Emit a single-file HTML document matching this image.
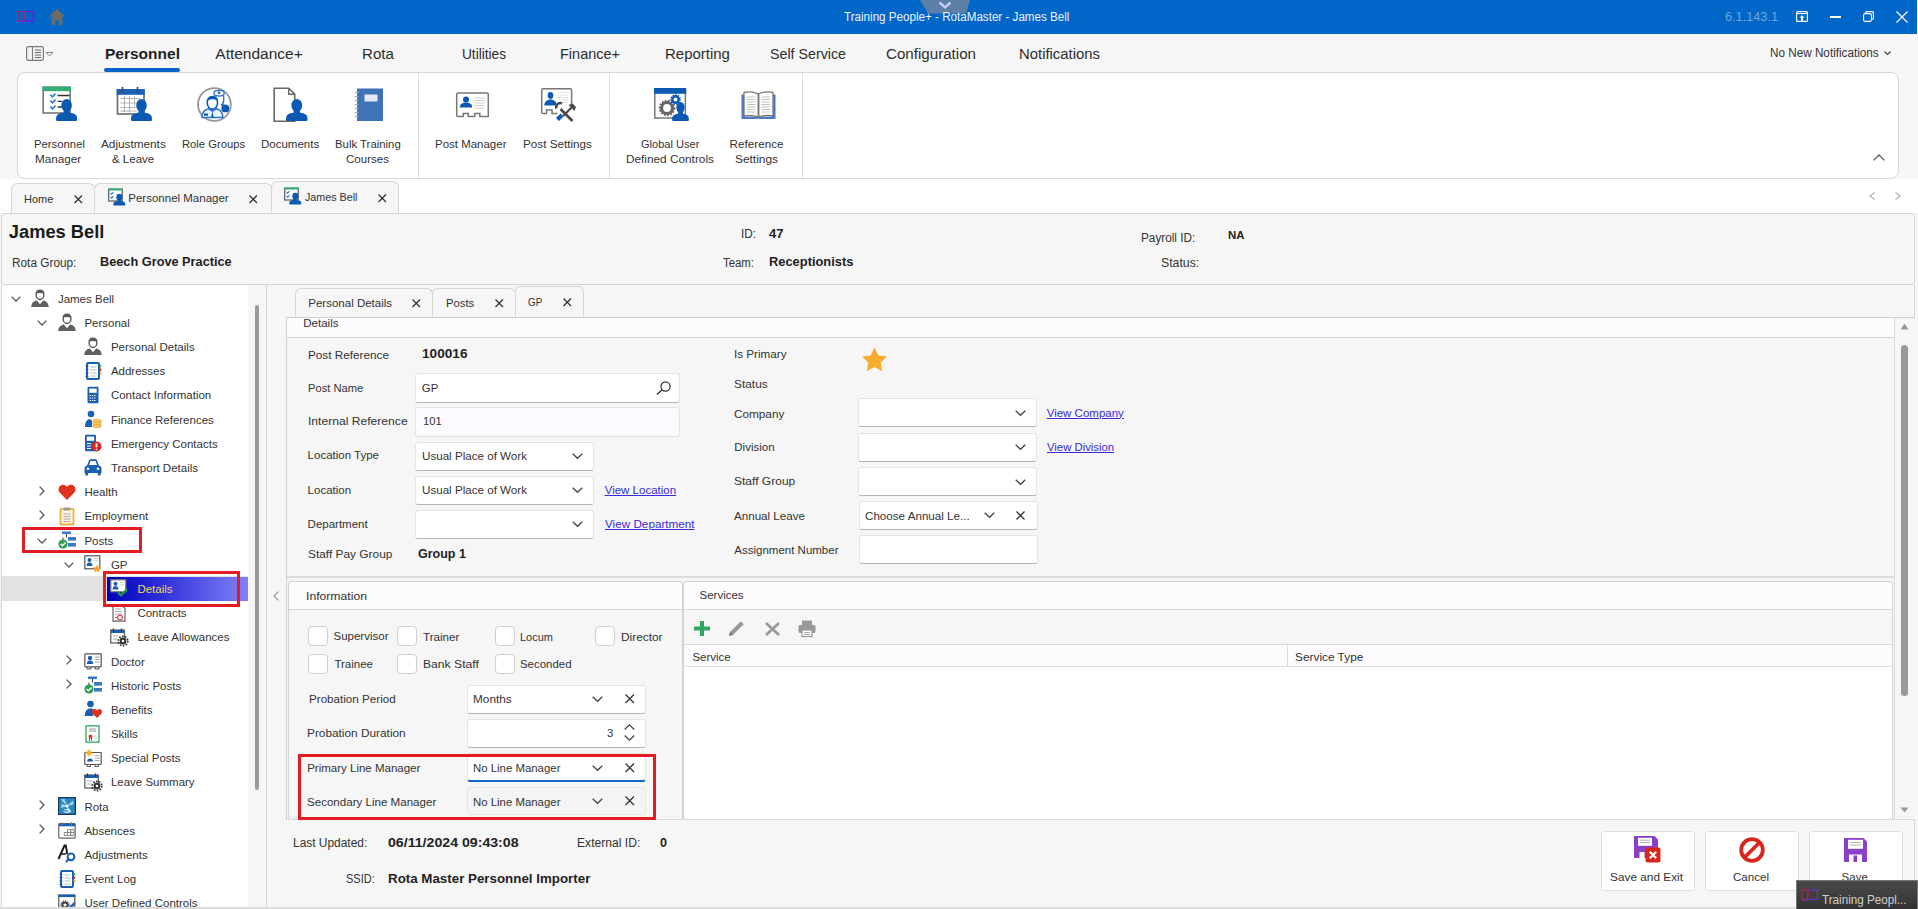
<!DOCTYPE html>
<html><head><meta charset="utf-8">
<style>
*{margin:0;padding:0;box-sizing:border-box}
html,body{width:1918px;height:909px;overflow:hidden;background:#f6f6f6;font-family:"Liberation Sans",sans-serif;color:#333}
.a{position:absolute}
.t{position:absolute;white-space:nowrap;line-height:1}
svg{position:absolute;overflow:visible}
</style></head><body>
<div class="a" style="left:0px;top:0px;width:1917px;height:34px;background:#0066c8"></div>
<div class="a" style="left:1917px;top:0px;width:1px;height:34px;background:#f6f6f6"></div>
<svg style="left:17px;top:10px" width="18" height="13" viewBox="0 0 18 13"><path d="M1 1.5h5.5c1.2 0 1.6 1 1.4 2.3L7 11.5H1z" fill="none" stroke="#c0206a" stroke-width="1.2"/><path d="M8 1.5h8v9.5H3" fill="none" stroke="#6020e0" stroke-width="1.3"/></svg>
<svg style="left:48px;top:8px" width="18" height="18" viewBox="0 0 18 18"><path d="M9 0.5L0.5 8.8h3v8.5h3.8v-5h3.4v5h3.8V8.8h3z" fill="#6a6a6a"/></svg>
<svg style="left:920px;top:0px" width="50" height="14" viewBox="0 0 50 14"><path d="M0 0h50l-4 13.5H8z" fill="#5b7fa6"/><path d="M19.5 2.5l5.5 5 5.5-5" fill="none" stroke="#c4ccf0" stroke-width="2.4"/></svg>
<div class="t" style="left:843.50px;top:10.74px;font-size:12px;color:#eef3ff;transform:scaleX(0.969);transform-origin:0 0;">Training People+ - RotaMaster - James Bell</div>
<div class="t" style="left:1725.00px;top:10.81px;font-size:12.5px;color:#6fa6e0;transform:scaleX(1.017);transform-origin:0 0;">6.1.143.1</div>
<svg style="left:1796px;top:11px" width="12" height="11" viewBox="0 0 12 11"><rect x="0.6" y="0.6" width="10.8" height="9.8" rx="1" fill="none" stroke="#fff" stroke-width="1.1"/><line x1="0.6" y1="2.6" x2="11.4" y2="2.6" stroke="#fff" stroke-width="1"/><path d="M6 4.2l-2.6 2.6h1.7v3.6h1.8V6.8h1.7z" fill="#fff"/></svg>
<div class="a" style="left:1830px;top:16px;width:11px;height:1.5px;background:#fff"></div>
<svg style="left:1863px;top:11px" width="11" height="11" viewBox="0 0 11 11"><rect x="0.6" y="2.6" width="7.8" height="7.8" rx="1.5" fill="none" stroke="#fff" stroke-width="1.1"/><path d="M2.6 2.6V1.8c0-.7.5-1.2 1.2-1.2h5.4c.7 0 1.2.5 1.2 1.2v5.4c0 .7-.5 1.2-1.2 1.2h-.8" fill="none" stroke="#fff" stroke-width="1.1"/></svg>
<svg style="left:1896px;top:11px" width="12" height="12" viewBox="0 0 12 12"><path d="M0.5 0.5l11 11M11.5 0.5l-11 11" stroke="#fff" stroke-width="1.2"/></svg>
<div class="a" style="left:0px;top:34px;width:1918px;height:38px;background:#f6f6f6"></div>
<svg style="left:26px;top:46px" width="30" height="15" viewBox="0 0 30 15"><rect x="0.6" y="0.6" width="16.8" height="13.8" rx="1.8" fill="#f4f4f4" stroke="#7a7a7a" stroke-width="1.2"/><line x1="6.5" y1="1" x2="6.5" y2="14" stroke="#7a7a7a" stroke-width="1.1"/><path d="M9 4h6M9 6.5h6M9 9h6M9 11.5h6" stroke="#666" stroke-width="1"/><path d="M20 6.5h7l-3.5 3.5z" fill="none" stroke="#888" stroke-width="1"/></svg>
<div class="t" style="left:105.00px;top:45.97px;font-size:15.5px;color:#1e1e1e;font-weight:bold;">Personnel</div>
<div class="a" style="left:104px;top:68px;width:76px;height:3.5px;background:#0a64c8;border-radius:2px"></div>
<div class="t" style="left:215.30px;top:45.97px;font-size:15.5px;color:#2d2d2d;">Attendance+</div>
<div class="t" style="left:362.00px;top:45.97px;font-size:15.5px;color:#2d2d2d;transform:scaleX(0.977);transform-origin:0 0;">Rota</div>
<div class="t" style="left:462.00px;top:45.97px;font-size:15.5px;color:#2d2d2d;transform:scaleX(0.881);transform-origin:0 0;">Utilities</div>
<div class="t" style="left:560.00px;top:45.97px;font-size:15.5px;color:#2d2d2d;transform:scaleX(0.935);transform-origin:0 0;">Finance+</div>
<div class="t" style="left:664.50px;top:45.97px;font-size:15.5px;color:#2d2d2d;transform:scaleX(0.966);transform-origin:0 0;">Reporting</div>
<div class="t" style="left:770.00px;top:45.97px;font-size:15.5px;color:#2d2d2d;transform:scaleX(0.919);transform-origin:0 0;">Self Service</div>
<div class="t" style="left:886.00px;top:45.97px;font-size:15.5px;color:#2d2d2d;transform:scaleX(0.976);transform-origin:0 0;">Configuration</div>
<div class="t" style="left:1019.00px;top:45.97px;font-size:15.5px;color:#2d2d2d;transform:scaleX(0.959);transform-origin:0 0;">Notifications</div>
<div class="t" style="left:1770.30px;top:47.34px;font-size:12px;color:#333;transform:scaleX(0.976);transform-origin:0 0;">No New Notifications</div>
<svg style="left:1884px;top:51px" width="7" height="5" viewBox="0 0 7 5"><path d="M0.5 0.5l3 3 3-3" fill="none" stroke="#444" stroke-width="1.2"/></svg>
<div class="a" style="left:17px;top:72px;width:1882px;height:107px;background:#fff;border:1px solid #d8d8d8;border-radius:8px"></div>
<div class="a" style="left:418px;top:73px;width:1px;height:105px;background:#dedede"></div>
<div class="a" style="left:609px;top:73px;width:1px;height:105px;background:#dedede"></div>
<div class="a" style="left:802px;top:73px;width:1px;height:105px;background:#dedede"></div>
<svg style="left:1873px;top:154px" width="12" height="7" viewBox="0 0 12 7"><path d="M0.6 6.4l5.4-5.4 5.4 5.4" fill="none" stroke="#555" stroke-width="1.3"/></svg>
<div class="t" style="left:33.90px;top:138.19px;font-size:11.7px;color:#333;transform:scaleX(0.968);transform-origin:0 0;">Personnel</div>
<div class="t" style="left:35.00px;top:152.59px;font-size:11.7px;color:#333;">Manager</div>
<div class="t" style="left:101.20px;top:138.19px;font-size:11.7px;color:#333;transform:scaleX(1.007);transform-origin:0 0;">Adjustments</div>
<div class="t" style="left:112.00px;top:152.59px;font-size:11.7px;color:#333;transform:scaleX(0.983);transform-origin:0 0;">&amp; Leave</div>
<div class="t" style="left:182.40px;top:138.19px;font-size:11.7px;color:#333;transform:scaleX(0.962);transform-origin:0 0;">Role Groups</div>
<div class="t" style="left:261.00px;top:138.19px;font-size:11.7px;color:#333;transform:scaleX(0.985);transform-origin:0 0;">Documents</div>
<div class="t" style="left:335.00px;top:138.19px;font-size:11.7px;color:#333;transform:scaleX(0.973);transform-origin:0 0;">Bulk Training</div>
<div class="t" style="left:346.00px;top:152.59px;font-size:11.7px;color:#333;transform:scaleX(0.987);transform-origin:0 0;">Courses</div>
<div class="t" style="left:435.00px;top:138.19px;font-size:11.7px;color:#333;transform:scaleX(0.982);transform-origin:0 0;">Post Manager</div>
<div class="t" style="left:523.00px;top:138.19px;font-size:11.7px;color:#333;">Post Settings</div>
<div class="t" style="left:640.60px;top:138.19px;font-size:11.7px;color:#333;transform:scaleX(0.945);transform-origin:0 0;">Global User</div>
<div class="t" style="left:626.00px;top:152.59px;font-size:11.7px;color:#333;transform:scaleX(1.010);transform-origin:0 0;">Defined Controls</div>
<div class="t" style="left:729.60px;top:138.19px;font-size:11.7px;color:#333;">Reference</div>
<div class="t" style="left:735.00px;top:152.59px;font-size:11.7px;color:#333;transform:scaleX(1.017);transform-origin:0 0;">Settings</div>
<div class="a" style="left:0px;top:179px;width:1918px;height:34px;background:#fff"></div>
<div class="a" style="left:11px;top:183px;width:84px;height:31px;background:#f6f6f6;border:1px solid #d6d6d6;border-bottom:none;border-radius:6px 6px 0 0"></div>
<div class="a" style="left:94px;top:183px;width:178px;height:31px;background:#f6f6f6;border:1px solid #d6d6d6;border-bottom:none;border-radius:6px 6px 0 0"></div>
<div class="a" style="left:271px;top:181px;width:128px;height:33px;background:#f6f6f6;border:1px solid #d6d6d6;border-bottom:none;border-radius:6px 6px 0 0"></div>
<div class="t" style="left:23.90px;top:193.56px;font-size:11.5px;color:#333;transform:scaleX(0.955);transform-origin:0 0;">Home</div>
<div class="t" style="left:128.30px;top:193.06px;font-size:11.5px;color:#333;">Personnel Manager</div>
<div class="t" style="left:305.00px;top:192.36px;font-size:11.5px;color:#333;transform:scaleX(0.933);transform-origin:0 0;">James Bell</div>
<svg style="left:73.5px;top:194.5px" width="8.5" height="8.5" viewBox="0 0 8.5 8.5"><path d="M0.5 0.5L8.0 8.0M8.0 0.5L0.5 8.0" stroke="#333" stroke-width="1.3"/></svg>
<svg style="left:249px;top:195px" width="8.5" height="8.5" viewBox="0 0 8.5 8.5"><path d="M0.5 0.5L8.0 8.0M8.0 0.5L0.5 8.0" stroke="#333" stroke-width="1.3"/></svg>
<svg style="left:377.5px;top:193.5px" width="8.5" height="8.5" viewBox="0 0 8.5 8.5"><path d="M0.5 0.5L8.0 8.0M8.0 0.5L0.5 8.0" stroke="#333" stroke-width="1.3"/></svg>
<svg style="left:1869px;top:192px" width="6" height="8" viewBox="0 0 6 8"><path d="M5.5 0.5L1 4l4.5 3.5" fill="none" stroke="#b0b0b0" stroke-width="1.2"/></svg>
<svg style="left:1895px;top:192px" width="6" height="8" viewBox="0 0 6 8"><path d="M0.5 0.5L5 4 0.5 7.5" fill="none" stroke="#b0b0b0" stroke-width="1.2"/></svg>
<div class="a" style="left:1px;top:213px;width:1914px;height:72px;background:#f6f6f6;border:1px solid #d4d4d4;border-radius:3px"></div>
<div class="t" style="left:8.80px;top:223.10px;font-size:18.3px;color:#1a1a1a;font-weight:bold;">James Bell</div>
<div class="t" style="left:11.50px;top:256.84px;font-size:12px;color:#333;transform:scaleX(0.985);transform-origin:0 0;">Rota Group:</div>
<div class="t" style="left:100.30px;top:256.41px;font-size:12.5px;color:#222;font-weight:bold;transform:scaleX(1.019);transform-origin:0 0;">Beech Grove Practice</div>
<div class="t" style="left:741.30px;top:228.24px;font-size:12px;color:#333;transform:scaleX(0.978);transform-origin:0 0;">ID:</div>
<div class="t" style="left:769.00px;top:227.81px;font-size:12.5px;color:#222;font-weight:bold;transform:scaleX(1.043);transform-origin:0 0;">47</div>
<div class="t" style="left:723.00px;top:256.64px;font-size:12px;color:#333;transform:scaleX(0.949);transform-origin:0 0;">Team:</div>
<div class="t" style="left:769.00px;top:256.21px;font-size:12.5px;color:#222;font-weight:bold;transform:scaleX(1.030);transform-origin:0 0;">Receptionists</div>
<div class="t" style="left:1140.70px;top:231.64px;font-size:12px;color:#333;transform:scaleX(0.981);transform-origin:0 0;">Payroll ID:</div>
<div class="t" style="left:1228.00px;top:229.81px;font-size:11.5px;color:#222;font-weight:bold;transform:scaleX(0.993);transform-origin:0 0;">NA</div>
<div class="t" style="left:1160.50px;top:256.64px;font-size:12px;color:#333;transform:scaleX(1.024);transform-origin:0 0;">Status:</div>
<div class="a" style="left:1px;top:285px;width:266px;height:624px;background:#f6f6f6;border-left:1px solid #d4d4d4;border-right:1px solid #d4d4d4"></div>
<div class="a" style="left:2px;top:285px;width:246px;height:624px;background:#fff"></div>
<div class="a" style="left:255px;top:305px;width:3.5px;height:485px;background:#9a9a9a;border-radius:2px"></div>
<div class="a" style="left:267px;top:285px;width:1648px;height:624px;background:#f6f6f6;border-right:1px solid #d4d4d4"></div>
<svg style="left:10.7px;top:295.6px" width="10" height="6" viewBox="0 0 10 6"><path d="M0.6 0.6l4.4 4.4 4.4-4.4" fill="none" stroke="#555" stroke-width="1.3"/></svg>
<svg style="left:31px;top:289px" width="18" height="18" viewBox="0 0 18 18"><path d="M9 1.3c-2.4 0-3.9 1.7-3.9 4.2 0 2.5 1.5 5 3.9 5s3.9-2.5 3.9-5c0-2.5-1.5-4.2-3.9-4.2z" fill="#fff" stroke="#5a5a5a" stroke-width="1.4"/><path d="M5.2 4.8c.6-2 2-3 3.8-3s3.2 1 3.8 3c-1.2-.6-2.4-.8-3.8-.8s-2.6.2-3.8.8z" fill="#5a5a5a"/><path d="M0.3 18c0-4.2 2.2-5.8 5.6-6.6L9 15.2l3.1-3.8c3.4.8 5.6 2.4 5.6 6.6z" fill="#606060"/></svg>
<div class="t" style="left:57.90px;top:293.66px;font-size:11.5px;color:#333;">James Bell</div>
<svg style="left:37.2px;top:319.79px" width="10" height="6" viewBox="0 0 10 6"><path d="M0.6 0.6l4.4 4.4 4.4-4.4" fill="none" stroke="#555" stroke-width="1.3"/></svg>
<svg style="left:58px;top:313px" width="18" height="18" viewBox="0 0 18 18"><path d="M9 1.3c-2.4 0-3.9 1.7-3.9 4.2 0 2.5 1.5 5 3.9 5s3.9-2.5 3.9-5c0-2.5-1.5-4.2-3.9-4.2z" fill="#fff" stroke="#5a5a5a" stroke-width="1.4"/><path d="M5.2 4.8c.6-2 2-3 3.8-3s3.2 1 3.8 3c-1.2-.6-2.4-.8-3.8-.8s-2.6.2-3.8.8z" fill="#5a5a5a"/><path d="M0.3 18c0-4.2 2.2-5.8 5.6-6.6L9 15.2l3.1-3.8c3.4.8 5.6 2.4 5.6 6.6z" fill="#606060"/></svg>
<div class="t" style="left:84.40px;top:317.85px;font-size:11.5px;color:#333;">Personal</div>
<svg style="left:84px;top:337px" width="18" height="18" viewBox="0 0 18 18"><path d="M9 1.3c-2.4 0-3.9 1.7-3.9 4.2 0 2.5 1.5 5 3.9 5s3.9-2.5 3.9-5c0-2.5-1.5-4.2-3.9-4.2z" fill="#fff" stroke="#5a5a5a" stroke-width="1.4"/><path d="M5.2 4.8c.6-2 2-3 3.8-3s3.2 1 3.8 3c-1.2-.6-2.4-.8-3.8-.8s-2.6.2-3.8.8z" fill="#5a5a5a"/><path d="M0.3 18c0-4.2 2.2-5.8 5.6-6.6L9 15.2l3.1-3.8c3.4.8 5.6 2.4 5.6 6.6z" fill="#606060"/></svg>
<div class="t" style="left:110.90px;top:342.04px;font-size:11.5px;color:#333;">Personal Details</div>
<svg style="left:84px;top:362px" width="18" height="18" viewBox="0 0 18 18"><rect x="3" y="1" width="12" height="16" rx="1" fill="#fff" stroke="#1a5fb4" stroke-width="2"/><path d="M6.5 5h6M6.5 8h6M6.5 11h6M6.5 14h6" stroke="#bbb" stroke-width="1"/><path d="M1.5 4h3M1.5 7.5h3M1.5 11h3M1.5 14.5h3" stroke="#1a5fb4" stroke-width="1.2"/><path d="M16.5 3v2.5" stroke="#3cb371" stroke-width="1.5"/><path d="M16.5 6.5v2.5" stroke="#e03030" stroke-width="1.5"/><path d="M16.5 10v2.5" stroke="#f0b030" stroke-width="1.5"/></svg>
<div class="t" style="left:110.90px;top:366.23px;font-size:11.5px;color:#333;">Addresses</div>
<svg style="left:84px;top:386px" width="18" height="18" viewBox="0 0 18 18"><rect x="3.5" y="0.8" width="11" height="16.4" rx="1.2" fill="#1a5fb4"/><rect x="5.3" y="2.6" width="7.4" height="4.2" fill="#fff"/><path d="M5.5 9.5h7M5.5 12h7M5.5 14.5h7" stroke="#fff" stroke-width="1.2" stroke-dasharray="1.4 0.9"/></svg>
<div class="t" style="left:110.90px;top:390.42px;font-size:11.5px;color:#333;">Contact Information</div>
<svg style="left:84px;top:410px" width="18" height="18" viewBox="0 0 18 18"><circle cx="7" cy="4" r="3.3" fill="#1a5fb4"/><path d="M1 17c0-5 1.8-7.5 5-8l2 2v6z" fill="#1a5fb4"/><ellipse cx="13" cy="11" rx="4.5" ry="1.8" fill="#f6c766" stroke="#e0a030" stroke-width="0.6"/><ellipse cx="13" cy="13.5" rx="4.5" ry="1.8" fill="#f6c766" stroke="#e0a030" stroke-width="0.6"/><ellipse cx="13" cy="16" rx="4.5" ry="1.8" fill="#f6c766" stroke="#e0a030" stroke-width="0.6"/></svg>
<div class="t" style="left:110.90px;top:414.61px;font-size:11.5px;color:#333;">Finance References</div>
<svg style="left:84px;top:434px" width="18" height="18" viewBox="0 0 18 18"><rect x="1" y="0.8" width="11" height="16.4" rx="1.2" fill="#1a5fb4"/><rect x="2.8" y="2.6" width="7.4" height="4.2" fill="#fff"/><path d="M3 9.5h4M3 12h4M3 14.5h4" stroke="#fff" stroke-width="1.2"/><circle cx="12.5" cy="12.5" r="5" fill="#d9261c"/><path d="M12.5 9.3v4" stroke="#fff" stroke-width="1.8"/><circle cx="12.5" cy="15.3" r="0.9" fill="#fff"/></svg>
<div class="t" style="left:110.90px;top:438.80px;font-size:11.5px;color:#333;">Emergency Contacts</div>
<svg style="left:84px;top:458px" width="18" height="18" viewBox="0 0 18 18"><path d="M3 7.5L5 2.5c.3-.8.9-1.2 1.8-1.2h4.4c.9 0 1.5.4 1.8 1.2l2 5c1.5.4 2.5 1.5 2.5 3V15H.5v-4.5c0-1.5 1-2.6 2.5-3z" fill="#1a5fb4"/><path d="M5 7l1.5-4h5L13 7z" fill="#fff"/><rect x="1.2" y="14" width="3" height="3.5" rx="1" fill="#1a5fb4"/><rect x="13.8" y="14" width="3" height="3.5" rx="1" fill="#1a5fb4"/><circle cx="4" cy="10.8" r="1.3" fill="#fff"/><circle cx="14" cy="10.8" r="1.3" fill="#fff"/></svg>
<div class="t" style="left:110.90px;top:462.99px;font-size:11.5px;color:#333;">Transport Details</div>
<svg style="left:39.2px;top:485.62px" width="6" height="10" viewBox="0 0 6 10"><path d="M0.6 0.6l4.4 4.4-4.4 4.4" fill="none" stroke="#555" stroke-width="1.3"/></svg>
<svg style="left:58px;top:483px" width="18" height="18" viewBox="0 0 18 18"><path d="M9 17L1.8 9.8C0 8 0 4.8 1.9 3c1.9-1.8 4.9-1.6 6.6.3L9 3.9l.5-.6c1.7-1.9 4.7-2.1 6.6-.3 1.9 1.8 1.9 5 .1 6.8z" fill="#e0301e"/></svg>
<div class="t" style="left:84.40px;top:487.18px;font-size:11.5px;color:#333;">Health</div>
<svg style="left:39.2px;top:509.81000000000006px" width="6" height="10" viewBox="0 0 6 10"><path d="M0.6 0.6l4.4 4.4-4.4 4.4" fill="none" stroke="#555" stroke-width="1.3"/></svg>
<svg style="left:58px;top:507px" width="18" height="18" viewBox="0 0 18 18"><rect x="2.5" y="2" width="13" height="15.5" rx="0.8" fill="#fdf6e3" stroke="#f0b040" stroke-width="1.8"/><rect x="6" y="0.5" width="6" height="3" fill="#999"/><path d="M5.5 7h7M5.5 9.5h7M5.5 12h7M5.5 14.5h7" stroke="#aaa" stroke-width="1"/></svg>
<div class="t" style="left:84.40px;top:511.37px;font-size:11.5px;color:#333;">Employment</div>
<svg style="left:37.2px;top:537.5px" width="10" height="6" viewBox="0 0 10 6"><path d="M0.6 0.6l4.4 4.4 4.4-4.4" fill="none" stroke="#555" stroke-width="1.3"/></svg>
<svg style="left:58px;top:531px" width="18" height="18" viewBox="0 0 18 18"><rect x="4" y="0.5" width="9" height="2.6" fill="#3a7ac0"/><path d="M8.5 3v3.5M5 6.5v3" stroke="#444" stroke-width="1"/><rect x="10" y="6" width="8" height="3.6" fill="#3a7ac0"/><rect x="10" y="12" width="8" height="3.6" fill="#3a7ac0"/><circle cx="5" cy="13" r="4.6" fill="#2e9e58"/><path d="M2.6 13l1.8 1.8 3.2-3.4" fill="none" stroke="#fff" stroke-width="1.4"/></svg>
<div class="t" style="left:84.40px;top:535.56px;font-size:11.5px;color:#333;">Posts</div>
<svg style="left:63.7px;top:561.69px" width="10" height="6" viewBox="0 0 10 6"><path d="M0.6 0.6l4.4 4.4 4.4-4.4" fill="none" stroke="#555" stroke-width="1.3"/></svg>
<svg style="left:84px;top:555px" width="18" height="18" viewBox="0 0 18 18"><rect x="0.8" y="0.8" width="15" height="13" fill="#fff" stroke="#555" stroke-width="1.2"/><circle cx="5.5" cy="5" r="2" fill="#1a5fb4"/><path d="M2.5 11c0-2.5 1.3-3.5 3-3.5s3 1 3 3.5z" fill="#1a5fb4"/><path d="M10 3.5h4M10 6h4" stroke="#aaa" stroke-width="0.7"/><path d="M13 9.5l1.3 2.7 3 .4-2.2 2 .6 3-2.7-1.5-2.7 1.5.6-3-2.2-2 3-.4z" fill="#f5a623"/></svg>
<div class="t" style="left:110.90px;top:559.75px;font-size:11.5px;color:#333;">GP</div>
<div class="a" style="left:2px;top:576px;width:246px;height:25px;background:#e3e3e3"></div>
<div class="a" style="left:107px;top:576.5px;width:141px;height:24px;background:linear-gradient(90deg,#0000b8 0%,#2a2ad8 35%,#5a5ae8 70%,#8080f8 100%)"></div>
<svg style="left:110px;top:579px" width="18" height="18" viewBox="0 0 18 18"><rect x="0.8" y="0.8" width="15" height="12" fill="#fff" stroke="#777" stroke-width="1.2"/><circle cx="5.5" cy="4.8" r="2" fill="#1a5fb4"/><path d="M2.5 10.5c0-2.5 1.3-3.5 3-3.5s3 1 3 3.5z" fill="#1a5fb4"/><path d="M10 3.5h4M10 6h4" stroke="#aaa" stroke-width="0.7"/><path d="M8 13.5l3 3 6-6.5" fill="none" stroke="#1e9e40" stroke-width="2.2"/></svg>
<div class="t" style="left:137.40px;top:583.94px;font-size:11.5px;color:#f2d25a;">Details</div>
<svg style="left:110px;top:604px" width="18" height="18" viewBox="0 0 18 18"><path d="M3 0.8h8.5l3.5 3.5V17.2H3z" fill="#fff" stroke="#666" stroke-width="1.2"/><path d="M5 5h6M5 7.5h7M5 10h7" stroke="#aaa" stroke-width="1"/><circle cx="10" cy="13.5" r="2.4" fill="none" stroke="#e04050" stroke-width="1.1"/><path d="M5 13.5h3" stroke="#e04050" stroke-width="1"/></svg>
<div class="t" style="left:137.40px;top:608.13px;font-size:11.5px;color:#333;">Contracts</div>
<svg style="left:110px;top:628px" width="18" height="18" viewBox="0 0 18 18"><rect x="0.8" y="2" width="13.5" height="13" fill="#fff" stroke="#555" stroke-width="1.2"/><rect x="0.8" y="2" width="13.5" height="3" fill="#1a5fb4"/><path d="M3.5 0.5v3M11.5 0.5v3" stroke="#333" stroke-width="1.2"/><path d="M3 8h5M3 11h4" stroke="#aaa" stroke-width="1"/><circle cx="13" cy="13" r="3.4" fill="#333"/><circle cx="13" cy="13" r="4.8" fill="none" stroke="#333" stroke-width="1.6" stroke-dasharray="1.6 1.4"/><circle cx="13" cy="13" r="1.3" fill="#fff"/></svg>
<div class="t" style="left:137.40px;top:632.32px;font-size:11.5px;color:#333;">Leave Allowances</div>
<svg style="left:65.7px;top:654.95px" width="6" height="10" viewBox="0 0 6 10"><path d="M0.6 0.6l4.4 4.4-4.4 4.4" fill="none" stroke="#555" stroke-width="1.3"/></svg>
<svg style="left:84px;top:652px" width="18" height="18" viewBox="0 0 18 18"><rect x="0.8" y="1.8" width="16.4" height="13" rx="0.8" fill="#fff" stroke="#555" stroke-width="1.2"/><circle cx="6" cy="6" r="2.2" fill="#1a5fb4"/><path d="M2.8 12c0-2.6 1.4-3.6 3.2-3.6s3.2 1 3.2 3.6z" fill="#1a5fb4"/><path d="M11 5h4.5M11 7.5h4.5M11 10h4.5" stroke="#999" stroke-width="0.9"/><path d="M3 15v2h4v-2M11 15v2h4v-2" fill="none" stroke="#555" stroke-width="1"/></svg>
<div class="t" style="left:110.90px;top:656.51px;font-size:11.5px;color:#333;">Doctor</div>
<svg style="left:65.7px;top:679.1400000000001px" width="6" height="10" viewBox="0 0 6 10"><path d="M0.6 0.6l4.4 4.4-4.4 4.4" fill="none" stroke="#555" stroke-width="1.3"/></svg>
<svg style="left:84px;top:676px" width="18" height="18" viewBox="0 0 18 18"><rect x="4" y="0.5" width="9" height="2.6" fill="#3a7ac0"/><path d="M8.5 3v3.5M5 6.5v3" stroke="#444" stroke-width="1"/><rect x="10" y="6" width="8" height="3.6" fill="#3a7ac0"/><rect x="10" y="12" width="8" height="3.6" fill="#3a7ac0"/><circle cx="5" cy="13" r="4.6" fill="#2e9e58"/><path d="M2.6 13l1.8 1.8 3.2-3.4" fill="none" stroke="#fff" stroke-width="1.4"/></svg>
<div class="t" style="left:110.90px;top:680.70px;font-size:11.5px;color:#333;">Historic Posts</div>
<svg style="left:84px;top:700px" width="18" height="18" viewBox="0 0 18 18"><circle cx="6.5" cy="4" r="3.3" fill="#1a5fb4"/><path d="M0.8 16c0-5 2-7.5 5.7-7.5 1.5 0 2.6.4 3.5 1.2L9 16z" fill="#1a5fb4"/><path d="M13 18l-4.3-4.3c-1.1-1.1-1.1-3 0-4 1.1-1.1 2.9-1 4 .2l.3.3.3-.3c1.1-1.2 2.9-1.3 4-.2 1.1 1 1.1 2.9 0 4z" fill="#e0301e"/></svg>
<div class="t" style="left:110.90px;top:704.89px;font-size:11.5px;color:#333;">Benefits</div>
<svg style="left:84px;top:725px" width="18" height="18" viewBox="0 0 18 18"><rect x="2" y="0.8" width="13" height="16.4" fill="#fff" stroke="#3cae6e" stroke-width="1.4"/><path d="M5 4h7M5 6h7" stroke="#888" stroke-width="0.9"/><circle cx="6.5" cy="11.5" r="2" fill="#e03b2a"/><path d="M5.5 13v3M7.5 13v3" stroke="#e03b2a" stroke-width="1"/><path d="M10 11h3M10 13h3" stroke="#bbb" stroke-width="0.8"/></svg>
<div class="t" style="left:110.90px;top:729.08px;font-size:11.5px;color:#333;">Skills</div>
<svg style="left:84px;top:749px" width="18" height="18" viewBox="0 0 18 18"><rect x="0.8" y="3.5" width="16.4" height="12" rx="0.8" fill="#fff" stroke="#555" stroke-width="1.2"/><circle cx="5" cy="4" r="2.2" fill="#f5b021"/><path d="M5 0v8M1 4h8M2.2 1.2l5.6 5.6M7.8 1.2L2.2 6.8" stroke="#f5b021" stroke-width="0.9"/><path d="M3 12.5c0-2 1.3-3 3-3s3 1 3 3z" fill="#1a5fb4"/><path d="M11 6.5h4.5M11 9h4.5M11 11.5h4.5" stroke="#999" stroke-width="0.9"/><path d="M3 15.5v2h3.5v-2M11 15.5v2h3.5v-2" fill="none" stroke="#555" stroke-width="1"/></svg>
<div class="t" style="left:110.90px;top:753.27px;font-size:11.5px;color:#333;">Special Posts</div>
<svg style="left:84px;top:773px" width="18" height="18" viewBox="0 0 18 18"><rect x="0.8" y="2" width="13.5" height="13" fill="#fff" stroke="#555" stroke-width="1.2"/><rect x="0.8" y="2" width="13.5" height="3" fill="#1a5fb4"/><path d="M3.5 0.5v3M11.5 0.5v3" stroke="#333" stroke-width="1.2"/><path d="M3 8h5M3 11h4" stroke="#aaa" stroke-width="1"/><circle cx="13" cy="13" r="3.4" fill="#333"/><circle cx="13" cy="13" r="4.8" fill="none" stroke="#333" stroke-width="1.6" stroke-dasharray="1.6 1.4"/><circle cx="13" cy="13" r="1.3" fill="#fff"/></svg>
<div class="t" style="left:110.90px;top:777.46px;font-size:11.5px;color:#333;">Leave Summary</div>
<svg style="left:39.2px;top:800.09px" width="6" height="10" viewBox="0 0 6 10"><path d="M0.6 0.6l4.4 4.4-4.4 4.4" fill="none" stroke="#555" stroke-width="1.3"/></svg>
<svg style="left:58px;top:797px" width="18" height="18" viewBox="0 0 18 18"><rect x="0.6" y="0.6" width="16.8" height="16.8" fill="#2a86c4" stroke="#1b3858" stroke-width="1.2"/><path d="M9 9L3 2.5l3.5-.5zM9 9l6-5.5.5 4zM9 9l-6.5 2 1.5-4zM9 9l4.5 5.5-4 .5z" fill="#a8dcf6"/><circle cx="9" cy="9" r="1.6" fill="#fff"/><path d="M5.5 14.5c2 1.2 5 1.2 7 0M6.5 12.8h5" fill="none" stroke="#fff" stroke-width="1"/></svg>
<div class="t" style="left:84.40px;top:801.65px;font-size:11.5px;color:#333;">Rota</div>
<svg style="left:39.2px;top:824.2800000000001px" width="6" height="10" viewBox="0 0 6 10"><path d="M0.6 0.6l4.4 4.4-4.4 4.4" fill="none" stroke="#555" stroke-width="1.3"/></svg>
<svg style="left:58px;top:821px" width="18" height="18" viewBox="0 0 18 18"><rect x="0.8" y="2.5" width="16.4" height="14.7" rx="1" fill="#fff" stroke="#666" stroke-width="1.2"/><rect x="0.8" y="2.5" width="16.4" height="2.8" fill="#1a5fb4"/><path d="M4 1v3M13.5 1v3" stroke="#888" stroke-width="1.1"/><rect x="9.5" y="8.5" width="3.2" height="3" fill="none" stroke="#888" stroke-width="0.9"/><rect x="12.7" y="8.5" width="3.2" height="3" fill="none" stroke="#888" stroke-width="0.9"/><rect x="6.3" y="11.5" width="3.2" height="3" fill="none" stroke="#888" stroke-width="0.9"/><rect x="9.5" y="11.5" width="3.2" height="3" fill="none" stroke="#888" stroke-width="0.9"/><rect x="12.7" y="11.5" width="3.2" height="3" fill="none" stroke="#888" stroke-width="0.9"/></svg>
<div class="t" style="left:84.40px;top:825.84px;font-size:11.5px;color:#333;">Absences</div>
<svg style="left:58px;top:845px" width="18" height="18" viewBox="0 0 18 18"><path d="M0.5 14L6.5 0.5h1.3l1.5 8.5" fill="none" stroke="#1a1a1a" stroke-width="1.9"/><path d="M3 9h5" stroke="#1a1a1a" stroke-width="1.5"/><circle cx="13" cy="11.8" r="3.4" fill="#fff" stroke="#1a5fb4" stroke-width="2"/><path d="M10.6 14.2L8 17" stroke="#1a5fb4" stroke-width="2.2"/></svg>
<div class="t" style="left:84.40px;top:850.03px;font-size:11.5px;color:#333;">Adjustments</div>
<svg style="left:58px;top:870px" width="18" height="18" viewBox="0 0 18 18"><rect x="3" y="1" width="12" height="16" rx="1" fill="#fff" stroke="#1a5fb4" stroke-width="2"/><path d="M6.5 5h6M6.5 8h6M6.5 11h6M6.5 14h6" stroke="#bbb" stroke-width="1"/><path d="M1.5 4h3M1.5 7.5h3M1.5 11h3M1.5 14.5h3" stroke="#1a5fb4" stroke-width="1.2"/><path d="M16.5 3v2.5" stroke="#3cb371" stroke-width="1.5"/><path d="M16.5 6.5v2.5" stroke="#e03030" stroke-width="1.5"/><path d="M16.5 10v2.5" stroke="#f0b030" stroke-width="1.5"/></svg>
<div class="t" style="left:84.40px;top:874.22px;font-size:11.5px;color:#333;">Event Log</div>
<svg style="left:58px;top:894px" width="18" height="18" viewBox="0 0 18 18"><rect x="0.8" y="1.2" width="16" height="15" fill="#fff" stroke="#555" stroke-width="1.2"/><rect x="0.2" y="0.5" width="17.2" height="2.6" fill="#1a5fb4"/><circle cx="7" cy="11" r="2.6" fill="none" stroke="#444" stroke-width="2"/><circle cx="7" cy="11" r="4" fill="none" stroke="#444" stroke-width="1.3" stroke-dasharray="1.2 1.1"/><path d="M10 14l6-6 1.8 1.8-6 6z" fill="#1a5fb4"/></svg>
<div class="t" style="left:84.40px;top:898.41px;font-size:11.5px;color:#333;">User Defined Controls</div>
<div class="a" style="left:22px;top:527px;width:120px;height:26px;border:3px solid #e31b23"></div>
<div class="a" style="left:103px;top:571px;width:137px;height:36px;border:3px solid #e31b23"></div>
<div class="a" style="left:295px;top:288px;width:138px;height:30px;background:#f6f6f6;border:1px solid #d6d6d6;border-bottom:none;border-radius:6px 6px 0 0"></div>
<div class="a" style="left:432px;top:288px;width:84px;height:30px;background:#f6f6f6;border:1px solid #d6d6d6;border-bottom:none;border-radius:6px 6px 0 0"></div>
<div class="a" style="left:515px;top:286px;width:69px;height:32px;background:#f6f6f6;border:1px solid #d6d6d6;border-bottom:none;border-radius:6px 6px 0 0"></div>
<div class="t" style="left:308.30px;top:297.56px;font-size:11.5px;color:#333;">Personal Details</div>
<div class="t" style="left:445.80px;top:297.56px;font-size:11.5px;color:#333;transform:scaleX(0.980);transform-origin:0 0;">Posts</div>
<div class="t" style="left:528.30px;top:296.76px;font-size:11.5px;color:#333;transform:scaleX(0.855);transform-origin:0 0;">GP</div>
<svg style="left:412px;top:299px" width="8.5" height="8.5" viewBox="0 0 8.5 8.5"><path d="M0.5 0.5L8.0 8.0M8.0 0.5L0.5 8.0" stroke="#333" stroke-width="1.3"/></svg>
<svg style="left:494.5px;top:299px" width="8.5" height="8.5" viewBox="0 0 8.5 8.5"><path d="M0.5 0.5L8.0 8.0M8.0 0.5L0.5 8.0" stroke="#333" stroke-width="1.3"/></svg>
<svg style="left:562.5px;top:298px" width="8.5" height="8.5" viewBox="0 0 8.5 8.5"><path d="M0.5 0.5L8.0 8.0M8.0 0.5L0.5 8.0" stroke="#333" stroke-width="1.3"/></svg>
<div class="a" style="left:286px;top:317px;width:1629px;height:503px;border-left:1px solid #d0d0d0;border-top:1px solid #d0d0d0;border-bottom:1px solid #d8d8d8"></div>
<div class="a" style="left:287px;top:318px;width:1607px;height:20px;background:#fdfbfe;border-bottom:1px solid #d4d4d4"></div>
<div class="t" style="left:303.30px;top:317.56px;font-size:11.5px;color:#333;">Details</div>
<div class="a" style="left:1894px;top:318px;width:21px;height:501px;background:#f6f6f6;border-left:1px solid #dcdcdc"></div>
<svg style="left:1900px;top:323px" width="9" height="7" viewBox="0 0 9 7"><path d="M4.5 0.5L8.5 6.5H0.5z" fill="#999"/></svg>
<div class="a" style="left:1900.5px;top:345px;width:7.5px;height:351px;background:#999;border-radius:4px"></div>
<svg style="left:1900px;top:807px" width="9" height="6" viewBox="0 0 9 6"><path d="M0.5 0.5h8L4.5 5.5z" fill="#999"/></svg>
<div class="a" style="left:287px;top:576px;width:1607px;height:1.5px;background:#dcdcdc"></div>
<div class="t" style="left:307.60px;top:349.76px;font-size:11.5px;color:#333;transform:scaleX(1.021);transform-origin:0 0;">Post Reference</div>
<div class="t" style="left:307.60px;top:382.56px;font-size:11.5px;color:#333;transform:scaleX(0.970);transform-origin:0 0;">Post Name</div>
<div class="t" style="left:307.60px;top:416.36px;font-size:11.5px;color:#333;transform:scaleX(1.053);transform-origin:0 0;">Internal Reference</div>
<div class="t" style="left:307.60px;top:449.66px;font-size:11.5px;color:#333;">Location Type</div>
<div class="t" style="left:307.60px;top:485.36px;font-size:11.5px;color:#333;">Location</div>
<div class="t" style="left:307.60px;top:519.06px;font-size:11.5px;color:#333;">Department</div>
<div class="t" style="left:307.60px;top:549.06px;font-size:11.5px;color:#333;transform:scaleX(1.034);transform-origin:0 0;">Staff Pay Group</div>
<div class="t" style="left:421.50px;top:347.81px;font-size:12.5px;color:#222;font-weight:bold;transform:scaleX(1.091);transform-origin:0 0;">100016</div>
<div class="a" style="left:415px;top:373px;width:265px;height:30px;background:#fff;border:1px solid #e4e4e4;border-bottom:1px solid #b4b4b4;border-radius:3px;"></div>
<div class="t" style="left:421.80px;top:382.56px;font-size:11.5px;color:#333;">GP</div>
<svg style="left:656px;top:381px" width="15" height="14" viewBox="0 0 15 14"><circle cx="9.5" cy="5.5" r="4.6" fill="none" stroke="#333" stroke-width="1.2"/><path d="M6.2 8.8L0.8 13.4" stroke="#333" stroke-width="1.3"/></svg>
<div class="a" style="left:415px;top:406.5px;width:265px;height:30px;background:#fcfaff;border:1px solid #e4e4e4;border-bottom:1px solid #b4b4b4;border-radius:3px;border-bottom:1px solid #e0e0e0"></div>
<div class="t" style="left:423.00px;top:416.36px;font-size:11.5px;color:#333;transform:scaleX(0.980);transform-origin:0 0;">101</div>
<div class="a" style="left:415px;top:441.5px;width:179px;height:29px;background:#fff;border:1px solid #e4e4e4;border-bottom:1px solid #b4b4b4;border-radius:3px;"></div>
<div class="t" style="left:421.60px;top:451.06px;font-size:11.5px;color:#333;transform:scaleX(1.010);transform-origin:0 0;">Usual Place of Work</div>
<svg style="left:572px;top:453px" width="11" height="6" viewBox="0 0 11 6"><path d="M0.7 0.7l4.8 4.6 4.8-4.6" fill="none" stroke="#444" stroke-width="1.3"/></svg>
<div class="a" style="left:415px;top:475.5px;width:179px;height:29px;background:#fff;border:1px solid #e4e4e4;border-bottom:1px solid #b4b4b4;border-radius:3px;"></div>
<div class="t" style="left:421.60px;top:485.36px;font-size:11.5px;color:#333;transform:scaleX(1.010);transform-origin:0 0;">Usual Place of Work</div>
<svg style="left:572px;top:487px" width="11" height="6" viewBox="0 0 11 6"><path d="M0.7 0.7l4.8 4.6 4.8-4.6" fill="none" stroke="#444" stroke-width="1.3"/></svg>
<div class="a" style="left:415px;top:509.5px;width:179px;height:29px;background:#fff;border:1px solid #e4e4e4;border-bottom:1px solid #b4b4b4;border-radius:3px;"></div>
<svg style="left:572px;top:521px" width="11" height="6" viewBox="0 0 11 6"><path d="M0.7 0.7l4.8 4.6 4.8-4.6" fill="none" stroke="#444" stroke-width="1.3"/></svg>
<div class="t" style="left:604.70px;top:485.36px;font-size:11.5px;color:#3a2bd8;text-decoration:underline;">View Location</div>
<div class="t" style="left:604.70px;top:519.06px;font-size:11.5px;color:#3a2bd8;transform:scaleX(1.018);transform-origin:0 0;text-decoration:underline;">View Department</div>
<div class="t" style="left:418.00px;top:548.21px;font-size:12.5px;color:#222;font-weight:bold;">Group 1</div>
<div class="t" style="left:734.30px;top:348.56px;font-size:11.5px;color:#333;transform:scaleX(1.014);transform-origin:0 0;">Is Primary</div>
<div class="t" style="left:734.30px;top:378.86px;font-size:11.5px;color:#333;transform:scaleX(1.034);transform-origin:0 0;">Status</div>
<div class="t" style="left:734.30px;top:408.56px;font-size:11.5px;color:#333;transform:scaleX(1.022);transform-origin:0 0;">Company</div>
<div class="t" style="left:734.30px;top:442.06px;font-size:11.5px;color:#333;">Division</div>
<div class="t" style="left:734.30px;top:476.46px;font-size:11.5px;color:#333;transform:scaleX(1.046);transform-origin:0 0;">Staff Group</div>
<div class="t" style="left:734.30px;top:510.86px;font-size:11.5px;color:#333;transform:scaleX(1.009);transform-origin:0 0;">Annual Leave</div>
<div class="t" style="left:734.30px;top:545.16px;font-size:11.5px;color:#333;">Assignment Number</div>
<svg style="left:861px;top:346.5px" width="27" height="26" viewBox="0 0 27 26"><path d="M13.5 0.5l3.9 8 8.6 1.1-6.3 6 1.6 8.6-7.8-4.2-7.8 4.2 1.6-8.6L1 9.6l8.6-1.1z" fill="#f7ac2e"/></svg>
<div class="a" style="left:857.5px;top:398px;width:179px;height:29px;background:#fff;border:1px solid #e4e4e4;border-bottom:1px solid #b4b4b4;border-radius:3px;"></div>
<svg style="left:1014.5px;top:410px" width="11" height="6" viewBox="0 0 11 6"><path d="M0.7 0.7l4.8 4.6 4.8-4.6" fill="none" stroke="#444" stroke-width="1.3"/></svg>
<div class="a" style="left:857.5px;top:432.5px;width:179px;height:29px;background:#fff;border:1px solid #e4e4e4;border-bottom:1px solid #b4b4b4;border-radius:3px;"></div>
<svg style="left:1014.5px;top:444px" width="11" height="6" viewBox="0 0 11 6"><path d="M0.7 0.7l4.8 4.6 4.8-4.6" fill="none" stroke="#444" stroke-width="1.3"/></svg>
<div class="a" style="left:857.5px;top:467px;width:179px;height:29px;background:#fff;border:1px solid #e4e4e4;border-bottom:1px solid #b4b4b4;border-radius:3px;"></div>
<svg style="left:1014.5px;top:478.5px" width="11" height="6" viewBox="0 0 11 6"><path d="M0.7 0.7l4.8 4.6 4.8-4.6" fill="none" stroke="#444" stroke-width="1.3"/></svg>
<div class="a" style="left:858.5px;top:501px;width:179px;height:29px;background:#fff;border:1px solid #e4e4e4;border-bottom:1px solid #b4b4b4;border-radius:3px;"></div>
<div class="t" style="left:865.00px;top:510.86px;font-size:11.5px;color:#333;transform:scaleX(1.011);transform-origin:0 0;">Choose Annual Le...</div>
<svg style="left:983.5px;top:512px" width="11" height="6" viewBox="0 0 11 6"><path d="M0.7 0.7l4.8 4.6 4.8-4.6" fill="none" stroke="#444" stroke-width="1.3"/></svg>
<svg style="left:1016px;top:510.5px" width="9" height="9" viewBox="0 0 9 9"><path d="M0.5 0.5L8.5 8.5M8.5 0.5L0.5 8.5" stroke="#333" stroke-width="1.3"/></svg>
<div class="a" style="left:858.5px;top:535px;width:179px;height:29px;background:#fff;border:1px solid #e4e4e4;border-bottom:1px solid #b4b4b4;border-radius:3px;"></div>
<div class="t" style="left:1046.70px;top:407.66px;font-size:11.5px;color:#3a2bd8;text-decoration:underline;">View Company</div>
<div class="t" style="left:1046.70px;top:442.06px;font-size:11.5px;color:#3a2bd8;transform:scaleX(0.984);transform-origin:0 0;text-decoration:underline;">View Division</div>
<div class="a" style="left:288px;top:581px;width:395px;height:238px;background:#f6f6f6;border:1px solid #d4d4d4;border-bottom:none;border-radius:4px 4px 0 0"></div>
<div class="a" style="left:289px;top:582px;width:393px;height:28px;background:#fdfbfe;border-bottom:1px solid #d8d8d8;border-radius:4px 4px 0 0"></div>
<div class="t" style="left:305.80px;top:590.56px;font-size:11.5px;color:#333;transform:scaleX(1.059);transform-origin:0 0;">Information</div>
<svg style="left:273px;top:591px" width="6" height="10" viewBox="0 0 6 10"><path d="M5.4 0.6L1 5l4.4 4.4" fill="none" stroke="#999" stroke-width="1.2"/></svg>
<div class="a" style="left:308px;top:626px;width:19.5px;height:19.5px;background:#fff;border:1px solid #cfcfcf;border-radius:4px"></div>
<div class="t" style="left:333.50px;top:630.56px;font-size:11.5px;color:#333;">Supervisor</div>
<div class="a" style="left:397px;top:626px;width:19.5px;height:19.5px;background:#fff;border:1px solid #cfcfcf;border-radius:4px"></div>
<div class="t" style="left:423.00px;top:631.76px;font-size:11.5px;color:#333;transform:scaleX(1.011);transform-origin:0 0;">Trainer</div>
<div class="a" style="left:495px;top:626px;width:19.5px;height:19.5px;background:#fff;border:1px solid #cfcfcf;border-radius:4px"></div>
<div class="t" style="left:520.40px;top:631.76px;font-size:11.5px;color:#333;transform:scaleX(0.953);transform-origin:0 0;">Locum</div>
<div class="a" style="left:595px;top:626px;width:19.5px;height:19.5px;background:#fff;border:1px solid #cfcfcf;border-radius:4px"></div>
<div class="t" style="left:620.50px;top:631.76px;font-size:11.5px;color:#333;transform:scaleX(1.031);transform-origin:0 0;">Director</div>
<div class="a" style="left:308px;top:654px;width:19.5px;height:19.5px;background:#fff;border:1px solid #cfcfcf;border-radius:4px"></div>
<div class="t" style="left:334.40px;top:659.06px;font-size:11.5px;color:#333;">Trainee</div>
<div class="a" style="left:397px;top:654px;width:19.5px;height:19.5px;background:#fff;border:1px solid #cfcfcf;border-radius:4px"></div>
<div class="t" style="left:422.50px;top:659.06px;font-size:11.5px;color:#333;transform:scaleX(1.056);transform-origin:0 0;">Bank Staff</div>
<div class="a" style="left:495px;top:654px;width:19.5px;height:19.5px;background:#fff;border:1px solid #cfcfcf;border-radius:4px"></div>
<div class="t" style="left:520.40px;top:659.06px;font-size:11.5px;color:#333;transform:scaleX(0.994);transform-origin:0 0;">Seconded</div>
<div class="t" style="left:309.20px;top:694.06px;font-size:11.5px;color:#333;transform:scaleX(1.012);transform-origin:0 0;">Probation Period</div>
<div class="a" style="left:466.5px;top:684.5px;width:179px;height:29px;background:#fff;border:1px solid #e4e4e4;border-bottom:1px solid #b4b4b4;border-radius:3px;"></div>
<div class="t" style="left:473.10px;top:694.06px;font-size:11.5px;color:#333;transform:scaleX(1.026);transform-origin:0 0;">Months</div>
<svg style="left:592px;top:696px" width="11" height="6" viewBox="0 0 11 6"><path d="M0.7 0.7l4.8 4.6 4.8-4.6" fill="none" stroke="#444" stroke-width="1.3"/></svg>
<svg style="left:624.5px;top:694px" width="9.5" height="9.5" viewBox="0 0 9.5 9.5"><path d="M0.5 0.5L9.0 9.0M9.0 0.5L0.5 9.0" stroke="#333" stroke-width="1.3"/></svg>
<div class="t" style="left:307.20px;top:728.46px;font-size:11.5px;color:#333;transform:scaleX(1.029);transform-origin:0 0;">Probation Duration</div>
<div class="a" style="left:466.5px;top:718.5px;width:179px;height:29px;background:#fff;border:1px solid #e4e4e4;border-bottom:1px solid #b4b4b4;border-radius:3px;"></div>
<div class="t" style="left:607.00px;top:728.46px;font-size:11.5px;color:#333;transform:scaleX(0.985);transform-origin:0 0;">3</div>
<svg style="left:624px;top:724px" width="11" height="18" viewBox="0 0 11 18"><path d="M0.7 5.5l4.8-4.6 4.8 4.6M0.7 11.5l4.8 4.6 4.8-4.6" fill="none" stroke="#444" stroke-width="1.3"/></svg>
<div class="t" style="left:307.20px;top:762.76px;font-size:11.5px;color:#333;">Primary Line Manager</div>
<div class="a" style="left:466.5px;top:752.5px;width:179px;height:29.5px;background:#fff;border:1px solid #e4e4e4;border-bottom:1px solid #b4b4b4;border-radius:3px;border-bottom:2px solid #1466c8"></div>
<div class="t" style="left:473.00px;top:762.76px;font-size:11.5px;color:#333;transform:scaleX(0.991);transform-origin:0 0;">No Line Manager</div>
<svg style="left:592px;top:764.5px" width="11" height="6" viewBox="0 0 11 6"><path d="M0.7 0.7l4.8 4.6 4.8-4.6" fill="none" stroke="#444" stroke-width="1.3"/></svg>
<svg style="left:624.5px;top:762.5px" width="9.5" height="9.5" viewBox="0 0 9.5 9.5"><path d="M0.5 0.5L9.0 9.0M9.0 0.5L0.5 9.0" stroke="#333" stroke-width="1.3"/></svg>
<div class="t" style="left:307.20px;top:797.06px;font-size:11.5px;color:#333;transform:scaleX(1.006);transform-origin:0 0;">Secondary Line Manager</div>
<div class="a" style="left:466.5px;top:787px;width:179px;height:28px;background:#f4f4f4;border:1px solid #e4e4e4;border-bottom:1px solid #b4b4b4;border-radius:3px;border:1px solid #e6e6e6"></div>
<div class="t" style="left:473.00px;top:797.06px;font-size:11.5px;color:#333;transform:scaleX(0.991);transform-origin:0 0;">No Line Manager</div>
<svg style="left:592px;top:798px" width="11" height="6" viewBox="0 0 11 6"><path d="M0.7 0.7l4.8 4.6 4.8-4.6" fill="none" stroke="#444" stroke-width="1.3"/></svg>
<svg style="left:624.5px;top:796px" width="9.5" height="9.5" viewBox="0 0 9.5 9.5"><path d="M0.5 0.5L9.0 9.0M9.0 0.5L0.5 9.0" stroke="#333" stroke-width="1.3"/></svg>
<div class="a" style="left:298px;top:754px;width:358px;height:66px;border:3px solid #e31b23"></div>
<div class="a" style="left:683px;top:581px;width:1210px;height:238px;background:#fff;border:1px solid #d4d4d4;border-bottom:none;border-radius:4px 4px 0 0"></div>
<div class="a" style="left:684px;top:582px;width:1208px;height:28px;background:#fdfbfe;border-bottom:1px solid #d8d8d8;border-radius:4px 4px 0 0"></div>
<div class="t" style="left:699.50px;top:590.36px;font-size:11.5px;color:#333;">Services</div>
<div class="a" style="left:684px;top:610px;width:1208px;height:35px;background:#f6f6f6;border-bottom:1px solid #d8d8d8"></div>
<svg style="left:694px;top:621px" width="16" height="15" viewBox="0 0 16 15"><path d="M6 0h4v5.5h6v4h-6V15H6V9.5H0v-4h6z" fill="#2ea860"/></svg>
<svg style="left:728px;top:621px" width="19" height="16" viewBox="0 0 19 16"><path d="M1 15l1.2-4.2L12.8 0.2l3 3L5.2 13.8z" fill="#999"/><path d="M1 15l4.2-1.2-3-3z" fill="#777"/></svg>
<svg style="left:765px;top:622px" width="15" height="14" viewBox="0 0 15 14"><path d="M1 1l13 12M14 1L1 13" stroke="#999" stroke-width="2.6"/></svg>
<svg style="left:798px;top:620px" width="18" height="17" viewBox="0 0 18 17"><rect x="4" y="0.5" width="10" height="5" fill="#999"/><rect x="0.5" y="5" width="17" height="8" rx="1.5" fill="#999"/><rect x="4" y="10" width="10" height="6.5" fill="#fff" stroke="#999" stroke-width="1.2"/><path d="M6 12.5h6M6 14.5h6" stroke="#999" stroke-width="0.8"/></svg>
<div class="a" style="left:684px;top:645px;width:1208px;height:22px;background:#fdfbfe;border-bottom:1px solid #dcdcdc"></div>
<div class="a" style="left:1287px;top:645px;width:1px;height:22px;background:#dcdcdc"></div>
<div class="t" style="left:692.40px;top:652.26px;font-size:11.5px;color:#333;">Service</div>
<div class="t" style="left:1294.90px;top:652.26px;font-size:11.5px;color:#333;transform:scaleX(1.031);transform-origin:0 0;">Service Type</div>
<div class="t" style="left:292.60px;top:837.24px;font-size:12px;color:#333;transform:scaleX(0.994);transform-origin:0 0;">Last Updated:</div>
<div class="t" style="left:388.30px;top:836.39px;font-size:13px;color:#222;font-weight:bold;transform:scaleX(1.088);transform-origin:0 0;">06/11/2024 09:43:08</div>
<div class="t" style="left:576.70px;top:837.24px;font-size:12px;color:#333;transform:scaleX(1.010);transform-origin:0 0;">External ID:</div>
<div class="t" style="left:660.20px;top:836.81px;font-size:12.5px;color:#222;font-weight:bold;transform:scaleX(1.007);transform-origin:0 0;">0</div>
<div class="t" style="left:346.00px;top:872.74px;font-size:12px;color:#333;transform:scaleX(0.916);transform-origin:0 0;">SSID:</div>
<div class="t" style="left:388.30px;top:871.89px;font-size:13px;color:#222;font-weight:bold;transform:scaleX(1.026);transform-origin:0 0;">Rota Master Personnel Importer</div>
<div class="a" style="left:1601px;top:831px;width:94px;height:60px;background:#fff;border:1px solid #e0e0e0;border-radius:3px"></div>
<div class="a" style="left:1705px;top:831px;width:94px;height:60px;background:#fff;border:1px solid #e0e0e0;border-radius:3px"></div>
<div class="a" style="left:1809px;top:831px;width:94px;height:60px;background:#fff;border:1px solid #e0e0e0;border-radius:3px"></div>
<svg style="left:1633px;top:835px" width="29" height="29" viewBox="0 0 29 29"><path d="M1 1h20.5l3.5 3.5V23H1z" fill="#8b3ec6"/><rect x="5" y="2.8" width="14" height="8" fill="#fff"/><path d="M7 5.2h10M7 7.6h10" stroke="#aaa" stroke-width="0.9"/><rect x="6.5" y="17" width="5" height="6" fill="#fff"/><rect x="12.5" y="12.5" width="15" height="15" rx="2" fill="#d9261c"/><path d="M16.8 16.8l6.4 6.4M23.2 16.8l-6.4 6.4" stroke="#fff" stroke-width="2.2"/></svg>
<svg style="left:1738.5px;top:836.5px" width="26" height="26" viewBox="0 0 26 26"><circle cx="13" cy="13" r="10.8" fill="none" stroke="#d9261c" stroke-width="3.8"/><path d="M5.5 20.5L20.5 5.5" stroke="#d9261c" stroke-width="3.8"/></svg>
<svg style="left:1843px;top:837px" width="25" height="26" viewBox="0 0 25 26"><path d="M1 1h19.5l3.5 3.5V25H1z" fill="#8b3ec6"/><rect x="5" y="2.8" width="15" height="9" fill="#fff"/><path d="M7 5.5h11M7 8h11" stroke="#aaa" stroke-width="0.9"/><rect x="6" y="17.5" width="13" height="7.5" fill="#fff"/><rect x="10.5" y="18.5" width="3.5" height="6.5" fill="#8b3ec6"/></svg>
<div class="t" style="left:1610.40px;top:871.76px;font-size:11.5px;color:#333;transform:scaleX(1.029);transform-origin:0 0;">Save and Exit</div>
<div class="t" style="left:1733.30px;top:871.76px;font-size:11.5px;color:#333;transform:scaleX(1.008);transform-origin:0 0;">Cancel</div>
<div class="t" style="left:1841.60px;top:871.76px;font-size:11.5px;color:#333;">Save</div>
<div class="a" style="left:0px;top:906.5px;width:1918px;height:2.5px;background:#dcdcdc"></div>
<div class="a" style="left:1796px;top:880px;width:122px;height:29px;background:linear-gradient(#4a4a4a,#333);border:1px solid #777;border-bottom:none"></div>
<svg style="left:1801px;top:889px" width="19" height="12" viewBox="0 0 19 12"><path d="M1 1h5c1 0 1.4.8 1.2 2L6.5 11H1z" fill="none" stroke="#c0206a" stroke-width="1.1"/><path d="M7.5 1h9v9.5H3" fill="none" stroke="#6a30e0" stroke-width="1.2"/></svg>
<div class="t" style="left:1822.40px;top:893.64px;font-size:12px;color:#d0d0d0;transform:scaleX(0.973);transform-origin:0 0;">Training Peopl...</div>
<svg style="left:42px;top:86px" width="36" height="36" viewBox="0 0 36 36"><rect x="1.2" y="1.2" width="27" height="25.8" fill="#fff" stroke="#777" stroke-width="1.6"/><rect x="0.4" y="0.6" width="28.6" height="4.6" fill="#32ad75"/><path d="M8.3 8.6l2.2 2.2 3-3.2M8.3 14.6l2.2 2.2 3-3.2M8.3 20.6l2.2 2.2 3-3.2" fill="none" stroke="#2e7bd0" stroke-width="1.6"/><path d="M15.5 9.5h12M15.5 15.3h4.5M15.5 21h5.5" stroke="#333" stroke-width="1.3"/><ellipse cx="24.60" cy="19.38" rx="5.25" ry="6.38" fill="#0a5ab4"/><path d="M21.87 24.00L27.33 24.00L27.75 26.64C33.42 27.30 35.10 29.28 35.10 32.80L35.10 34.00Q35.10 35.00 33.84 35.00L15.36 35.00Q14.10 35.00 14.10 34.00L14.10 32.80C14.10 29.28 15.78 27.30 21.45 26.64Z" fill="#0a5ab4"/></svg>
<svg style="left:116px;top:86px" width="37" height="36" viewBox="0 0 37 36"><rect x="1.5" y="5" width="26.5" height="23" fill="#fff" stroke="#777" stroke-width="1.8"/><rect x="0.6" y="3" width="28.2" height="5.8" fill="#1d62b8"/><path d="M6.5 1v5.5M21.5 1v5.5" stroke="#444" stroke-width="1.6"/><path d="M4.5 12.5h20M4.5 17h16M4.5 21.5h16M4.5 25h16M8.5 10v16M13.5 10v16M18.5 10v10" stroke="#aaa" stroke-width="0.9"/><ellipse cx="25.50" cy="19.38" rx="5.25" ry="6.38" fill="#0a5ab4"/><path d="M22.77 24.00L28.23 24.00L28.65 26.64C34.32 27.30 36.00 29.28 36.00 32.80L36.00 34.00Q36.00 35.00 34.74 35.00L16.26 35.00Q15.00 35.00 15.00 34.00L15.00 32.80C15.00 29.28 16.68 27.30 22.35 26.64Z" fill="#0a5ab4"/></svg>
<svg style="left:196px;top:87px" width="36" height="36" viewBox="0 0 36 36"><circle cx="18.4" cy="17.5" r="16.4" fill="#fff" stroke="#9a9a9a" stroke-width="1.9"/><ellipse cx="23" cy="6.2" rx="5.2" ry="2.8" fill="#fff" stroke="#2f74c8" stroke-width="1.3"/><circle cx="23" cy="5.8" r="1.3" fill="#0a5ab4"/><path d="M18.5 8.5c-.3 3.5.5 6.5 3.2 8.2M27.5 8c.5 3.5.3 7-1 9.5" fill="none" stroke="#2f74c8" stroke-width="1.4"/><circle cx="29.3" cy="21.4" r="3.9" fill="#0a5ab4"/><path d="M25 17.5l3 1" stroke="#0a5ab4" stroke-width="1.5"/><path d="M16.4 9.6c-3.2 0-5.2 2.3-5.2 5.8 0 3.8 2.2 6.7 5.2 6.7s5.2-2.9 5.2-6.7c0-3.5-2-5.8-5.2-5.8z" fill="#fff" stroke="#0a5ab4" stroke-width="1.6"/><path d="M11.3 14.5c0-3.5 2.2-5 5.1-5s5.1 1.5 5.1 5c-1.2-1.6-3-2.2-5.1-2.2s-3.9.6-5.1 2.2z" fill="#0a5ab4"/><path d="M6 30.5c0-5.5 2-7.8 6.5-8.8l3.9 2.3 3.9-2.3c4.5 1 6.5 3.3 6.5 8.8z" fill="#eaf2fc" stroke="#2f74c8" stroke-width="1.6"/><path d="M16.4 24l-1.3 6.5h2.6z" fill="#0a5ab4"/><rect x="8" y="26.5" width="4" height="2.2" fill="#0a5ab4"/></svg>
<svg style="left:273px;top:87px" width="36" height="36" viewBox="0 0 36 36"><path d="M1.2 1.2h14.5l6 6v27H1.2z" fill="#fff" stroke="#666" stroke-width="1.6"/><path d="M15.7 1.2v6h6" fill="none" stroke="#666" stroke-width="1.4"/><ellipse cx="23.80" cy="18.38" rx="5.38" ry="6.38" fill="#0a5ab4"/><path d="M21.01 23.00L26.59 23.00L27.03 25.64C32.83 26.30 34.55 28.28 34.55 31.80L34.55 33.00Q34.55 34.00 33.26 34.00L14.34 34.00Q13.05 34.00 13.05 33.00L13.05 31.80C13.05 28.28 14.77 26.30 20.57 25.64Z" fill="#0a5ab4"/></svg>
<svg style="left:354px;top:88px" width="32" height="34" viewBox="0 0 32 34"><rect x="3" y="0.5" width="26" height="32.5" fill="#3e73b8"/><rect x="10.5" y="6.5" width="13" height="7" fill="#e6e9f5"/><path d="M0.8 4.5h4M0.8 8.5h4M0.8 12.5h4M0.8 16.5h4M0.8 20.5h4M0.8 24.5h4M0.8 28.5h4" stroke="#9aa6b8" stroke-width="1.2"/></svg>
<svg style="left:456px;top:92px" width="34" height="28" viewBox="0 0 34 28"><path d="M2 1h29c.8 0 1.3.5 1.3 1.3v22.2h-8.5v-3h-5v3h-6.6v-3h-5v3H2c-.8 0-1.3-.5-1.3-1.3V2.3C.7 1.5 1.2 1 2 1z" fill="#fff" stroke="#777" stroke-width="1.5"/><circle cx="10" cy="7.5" r="3" fill="#0a5ab4"/><path d="M3.8 15.5c0-3.6 2.6-5 6.2-5s6.2 1.4 6.2 5z" fill="#0a5ab4"/><path d="M18.5 6h10M18.5 8.5h10M18.5 11h10M18.5 13.5h10M18.5 16h10" stroke="#ccc" stroke-width="0.9"/></svg>
<svg style="left:541px;top:88px" width="36" height="34" viewBox="0 0 36 34"><path d="M16.5 25.5H11v-3.5H5.5v3.5H2c-.8 0-1.3-.5-1.3-1.3V2.1C.7 1.3 1.2.8 2 .8h27.3c.8 0 1.3.5 1.3 1.3V16" fill="#fff" stroke="#777" stroke-width="1.5"/><ellipse cx="9.5" cy="7.4" rx="2.8" ry="3.4" fill="#0a5ab4"/><path d="M3.3 17.5c0-3.6 2.6-6 6.2-6s6.2 2.4 6.2 6z" fill="#0a5ab4"/><path d="M18 4.5h9.5M18 7h9.5M18 9.5h9.5M18 12h9.5M18 14.5h9.5" stroke="#d8d8d8" stroke-width="0.8"/><path d="M19.5 21l12 12" stroke="#4a4a4a" stroke-width="2.6"/><path d="M15.5 20.5a4 4 0 0 1 5.5-5" fill="none" stroke="#4a4a4a" stroke-width="2.4"/><path d="M31 19l-9 9" stroke="#4a4a4a" stroke-width="2.2"/><path d="M27.5 17l4 -1.5 3.5 3.5-1.5 4z" fill="#4a4a4a"/><path d="M22.5 28.5l-4.5 4.5-3-3 4.5-4.5z" fill="#0a5ab4"/></svg>
<svg style="left:654px;top:88px" width="36" height="34" viewBox="0 0 36 34"><rect x="0.8" y="1" width="30.6" height="29" fill="#fff" stroke="#777" stroke-width="1.5"/><rect x="0" y="0" width="32.2" height="5.8" fill="#0a5ab4"/><circle cx="13" cy="20" r="5.5" fill="none" stroke="#666" stroke-width="3.2"/><circle cx="13" cy="20" r="7.3" fill="none" stroke="#666" stroke-width="2" stroke-dasharray="1.7 1.5"/><circle cx="21.5" cy="11.5" r="3.2" fill="none" stroke="#0a5ab4" stroke-width="2.4"/><circle cx="21.5" cy="11.5" r="4.6" fill="none" stroke="#0a5ab4" stroke-width="1.4" stroke-dasharray="1.4 1.2"/><ellipse cx="26.50" cy="19.51" rx="4.17" ry="5.51" fill="#0a5ab4"/><path d="M24.33 23.50L28.67 23.50L29.00 25.78C33.51 26.35 34.85 28.06 34.85 31.10L34.85 32.00Q34.85 33.00 33.85 33.00L19.15 33.00Q18.15 33.00 18.15 32.00L18.15 31.10C18.15 28.06 19.49 26.35 24.00 25.78Z" fill="#0a5ab4"/></svg>
<svg style="left:741px;top:91px" width="35" height="29" viewBox="0 0 35 29"><path d="M0.5 3.5h3v22h13.8v2.5H0.5zM34.5 3.5h-3v22H17.7v2.5h16.8z" fill="#4a7bc0"/><path d="M3 1.5c4-1 9-1 14.2 1.3V26c-5-2-10-2-14.2-1.2zM32 1.5c-4-1-9-1-14.2 1.3V26c5-2 10-2 14.2-1.2z" fill="#fff" stroke="#777" stroke-width="1.3"/><path d="M6 6h8.5M6 8.5h8.5M6 11h8.5M6 13.5h8.5M6 16h8.5M6 18.5h8.5M6 21h8.5M20.5 6H29M20.5 8.5H29M20.5 11H29M20.5 13.5H29M20.5 16H29M20.5 18.5H29M20.5 21H29" stroke="#bbb" stroke-width="0.9"/></svg>
<svg style="left:108px;top:188px" width="18" height="18" viewBox="0 0 18 18"><rect x="0.7" y="1.2" width="13.5" height="11.8" fill="#fff" stroke="#555" stroke-width="1.2"/><rect x="0.2" y="0.5" width="14.5" height="2" fill="#32ad75"/><path d="M2.5 5l1.2 1.2 1.8-2M2.5 9l1.2 1.2 1.8-2" fill="none" stroke="#2e7bd0" stroke-width="1.1"/><ellipse cx="11.30" cy="9.19" rx="3.00" ry="3.39" fill="#0a5ab4"/><path d="M9.74 11.65L12.86 11.65L13.10 13.05C16.34 13.40 17.30 14.46 17.30 16.33L17.30 16.50Q17.30 17.50 16.58 17.50L6.02 17.50Q5.30 17.50 5.30 16.50L5.30 16.33C5.30 14.46 6.26 13.40 9.50 13.05Z" fill="#0a5ab4"/></svg>
<svg style="left:284px;top:187px" width="18" height="18" viewBox="0 0 18 18"><rect x="0.7" y="1.2" width="13.5" height="11.8" fill="#fff" stroke="#555" stroke-width="1.2"/><rect x="0.2" y="0.5" width="14.5" height="2" fill="#32ad75"/><path d="M2.5 5l1.2 1.2 1.8-2M2.5 9l1.2 1.2 1.8-2" fill="none" stroke="#2e7bd0" stroke-width="1.1"/><ellipse cx="11.30" cy="9.19" rx="3.00" ry="3.39" fill="#0a5ab4"/><path d="M9.74 11.65L12.86 11.65L13.10 13.05C16.34 13.40 17.30 14.46 17.30 16.33L17.30 16.50Q17.30 17.50 16.58 17.50L6.02 17.50Q5.30 17.50 5.30 16.50L5.30 16.33C5.30 14.46 6.26 13.40 9.50 13.05Z" fill="#0a5ab4"/></svg>
</body></html>
